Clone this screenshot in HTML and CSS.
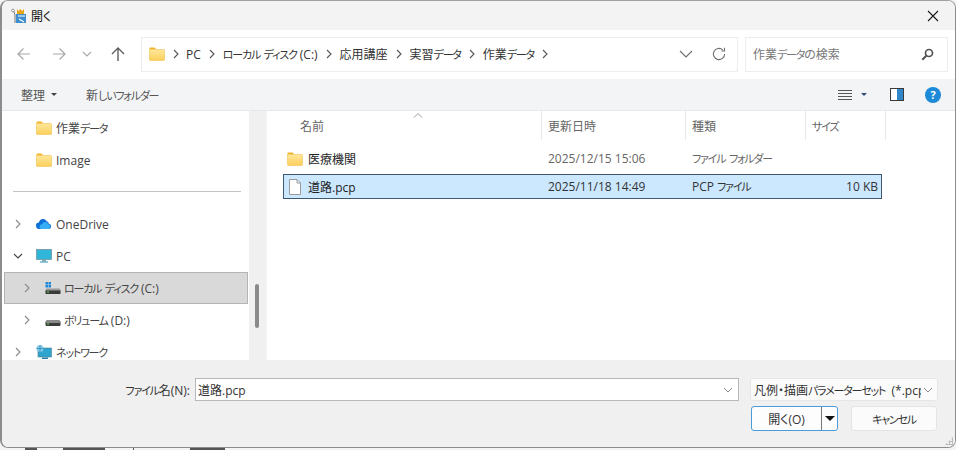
FILE: index.html
```html
<!DOCTYPE html>
<html lang="ja">
<head>
<meta charset="utf-8">
<title>開く</title>
<link rel="stylesheet" href="styles.css">
</head>
<body>
<svg class="defs" width="0" height="0" aria-hidden="true">
  <defs>
    <linearGradient id="fg" x1="0" y1="0" x2="0" y2="1"><stop offset="0" stop-color="#ffe79a"/><stop offset="1" stop-color="#fbcf5c"/></linearGradient>
    <symbol id="folder" viewBox="0 0 16 14">
      <path d="M0.5 1.5a1 1 0 0 1 1-1h4l2 2h-7z" fill="#f0b429"/>
      <path d="M0.5 2.5h14a1 1 0 0 1 1 1v9a1 1 0 0 1-1 1h-13a1 1 0 0 1-1-1z" fill="url(#fg)" stroke="#f2c14e" stroke-width=".6"/>
    </symbol>
    <symbol id="chev" viewBox="0 0 10 10"><path d="M3 1l4 4-4 4" fill="none" stroke="currentColor" stroke-width="1.1"/></symbol>
    <symbol id="drive" viewBox="0 0 16 14">
      <rect x="0.5" y="8" width="15" height="5" rx="1" fill="#3c3c3c"/>
      <rect x="1" y="7" width="14" height="3" rx="1" fill="#8a8a8a"/>
      <rect x="2" y="10.5" width="2" height="1" fill="#5fd35f"/>
    </symbol>
  </defs>
</svg>
<div class="dialog">
  <header class="titlebar">
    <svg class="app-icon" width="16" height="16" viewBox="0 0 16 16" aria-hidden="true">
      <rect x="5" y="6" width="10" height="9" fill="#3f8fd0"/>
      <path d="M6 1l1.5 2L9.5 1l1.5 2L13 1v5H6z" fill="#e8a712"/>
      <path d="M7 8h7M8 11l5 3" stroke="#fff" stroke-width="1.2"/>
      <path d="M2 1l2 6v8" fill="none" stroke="#777" stroke-width="1"/>
      <circle cx="2" cy="2.5" r="1.4" fill="#fff" stroke="#777" stroke-width=".7"/>
    </svg>
    <span class="title-text">開く</span>
    <svg class="close" width="12" height="12" viewBox="0 0 12 12" aria-hidden="true"><path d="M1 1l10 10M11 1L1 11" stroke="#1a1a1a" stroke-width="1.1"/></svg>
  </header>

  <nav class="navbar">
    <div class="nav-buttons">
      <svg class="nav-btn" width="16" height="16" viewBox="0 0 16 16" aria-hidden="true"><path d="M14 8H2M7.5 2.5L2 8l5.5 5.5" fill="none" stroke="#a8a8a8" stroke-width="1.2"/></svg>
      <svg class="nav-btn" width="16" height="16" viewBox="0 0 16 16" aria-hidden="true"><path d="M2 8h12M8.500 2.500L14 8l-5.500 5.500" fill="none" stroke="#a8a8a8" stroke-width="1.2"/></svg>
      <svg class="nav-small" width="10" height="10" viewBox="0 0 10 10" aria-hidden="true"><path d="M1 3l4 4 4-4" fill="none" stroke="#a8a8a8" stroke-width="1.1"/></svg>
      <svg class="nav-up" width="16" height="16" viewBox="0 0 16 16" aria-hidden="true"><path d="M8 15V2M2 8l6-6 6 6" fill="none" stroke="#5f5f5f" stroke-width="1.4"/></svg>
    </div>
    <div class="address">
      <svg class="addr-folder" width="16" height="14" aria-hidden="true"><use href="#folder"/></svg>
      <svg class="crumb-sep first" width="10" height="10" aria-hidden="true"><use href="#chev"/></svg>
      <span>PC</span>
      <svg class="crumb-sep" width="10" height="10" aria-hidden="true"><use href="#chev"/></svg>
      <span><span class="k">ローカル ディスク</span> (C:)</span>
      <svg class="crumb-sep" width="10" height="10" aria-hidden="true"><use href="#chev"/></svg>
      <span>応用講座</span>
      <svg class="crumb-sep" width="10" height="10" aria-hidden="true"><use href="#chev"/></svg>
      <span>実習<span class="k">データ</span></span>
      <svg class="crumb-sep" width="10" height="10" aria-hidden="true"><use href="#chev"/></svg>
      <span>作業<span class="k">データ</span></span>
      <svg class="crumb-sep" width="10" height="10" aria-hidden="true"><use href="#chev"/></svg>
      <span class="spacer"></span>
      <svg class="addr-down" width="14" height="8" viewBox="0 0 14 8" aria-hidden="true"><path d="M1 1l6 6 6-6" fill="none" stroke="#6e6e6e" stroke-width="1.1"/></svg>
      <svg class="addr-refresh" width="14" height="14" viewBox="0 0 14 14" aria-hidden="true"><path d="M12.600 7A5.600 5.600 0 1 1 10.800 2.900" fill="none" stroke="#6e6e6e" stroke-width="1.1"/><path d="M12.500 .8v3.200H9.300" fill="none" stroke="#6e6e6e" stroke-width="1.1"/></svg>
    </div>
    <div class="search">
      <span>作業<span class="k">データ</span>の検索</span>
      <svg width="13" height="13" viewBox="0 0 13 13" aria-hidden="true"><circle cx="8" cy="5" r="3.500" fill="none" stroke="#555" stroke-width="1.700"/><path d="M5.500 7.500L1.300 11.700" stroke="#555" stroke-width="2"/></svg>
    </div>
  </nav>

  <div class="toolbar">
    <span class="tool">整理<i class="caret"></i></span>
    <span class="tool new-folder"><span>新<span class="k">しいフォルダー</span></span></span>
    <span class="spacer"></span>
    <svg class="tb-list" width="14" height="12" viewBox="0 0 14 12" aria-hidden="true"><path d="M0 1.500h14M0 4.500h14M0 7.500h14M0 10.500h14" stroke="#555" stroke-width="1"/></svg>
    <i class="caret dark"></i>
    <span class="pane-icon"></span>
    <span class="help">?</span>
  </div>

  <main class="main">
    <aside class="tree">
      <div class="row lvl1"><span class="chev-slot"></span><svg class="ico" width="16" height="14" aria-hidden="true"><use href="#folder"/></svg><span>作業<span class="k">データ</span></span></div>
      <div class="row lvl1"><span class="chev-slot"></span><svg class="ico" width="16" height="14" aria-hidden="true"><use href="#folder"/></svg><span>Image</span></div>
      <div class="tree-sep"></div>
      <div class="row lvl1"><span class="chev-slot"><svg width="10" height="10" aria-hidden="true"><use href="#chev"/></svg></span>
        <svg class="ico" width="16" height="12" viewBox="0 0 16 11" aria-hidden="true"><path d="M3.500 10.500a3.200 3.200 0 0 1-.5-6.400A4 4 0 0 1 10.600 2.800a3.300 3.300 0 0 1 2.300 2.400A2.700 2.700 0 0 1 13 10.500z" fill="#0f6fd8"/><path d="M5 10.500a2.500 2.500 0 0 1 1-4.800 3.500 3.500 0 0 1 6.500 0A2.600 2.600 0 0 1 13 10.500z" fill="#35aef5"/></svg>
        <span>OneDrive</span></div>
      <div class="row lvl1"><span class="chev-slot down"><svg width="10" height="10" viewBox="0 0 10 10" aria-hidden="true"><path d="M1 3l4 4 4-4" fill="none" stroke="#444" stroke-width="1.200"/></svg></span>
        <svg class="ico" width="16" height="14" viewBox="0 0 16 14" aria-hidden="true"><rect x="0.500" y="0.500" width="15" height="10" fill="#2fb6d8" stroke="#6d8a96" stroke-width=".7"/><rect x="6" y="11" width="4" height="1.500" fill="#8aa"/><rect x="4" y="12.500" width="8" height="1" fill="#2a93b8"/></svg>
        <span>PC</span></div>
      <div class="row lvl2 selected"><span class="chev-slot"><svg width="10" height="10" aria-hidden="true"><use href="#chev"/></svg></span>
        <svg class="ico" width="16" height="14" viewBox="0 0 16 14" aria-hidden="true"><rect x="0.500" y="1" width="2.500" height="2.500" fill="#1e88d8"/><rect x="3.500" y="1" width="2.500" height="2.500" fill="#1e88d8"/><rect x="0.500" y="4" width="2.500" height="2.500" fill="#1e88d8"/><rect x="3.500" y="4" width="2.500" height="2.500" fill="#1e88d8"/><rect x="0.500" y="9" width="15" height="4" rx=".5" fill="#3a3a3a"/><rect x="1" y="7.500" width="14" height="2" fill="#999"/><rect x="2" y="10.500" width="2" height="1" fill="#5fd35f"/></svg>
        <span><span class="k">ローカル ディスク</span> (C:)</span></div>
      <div class="row lvl2"><span class="chev-slot"><svg width="10" height="10" aria-hidden="true"><use href="#chev"/></svg></span>
        <svg class="ico" width="16" height="14" aria-hidden="true"><use href="#drive"/></svg>
        <span><span class="k">ボリューム</span> (D:)</span></div>
      <div class="row lvl1"><span class="chev-slot"><svg width="10" height="10" aria-hidden="true"><use href="#chev"/></svg></span>
        <svg class="ico" width="16" height="15" viewBox="0 0 16 15" aria-hidden="true"><rect x="2" y="3" width="13.500" height="9" fill="#2fa4cf" stroke="#4c7d90" stroke-width=".6"/><circle cx="4" cy="3.500" r="3.500" fill="#7fc8e8"/><path d="M.5 3.500h7M4 0v7" stroke="#2a7ca8" stroke-width=".6"/><rect x="6" y="12.500" width="6" height="1.500" fill="#2a7ca8"/></svg>
        <span class="k">ネットワーク</span></div>
    </aside>
    <div class="scrollbar"><div class="thumb"></div></div>
    <section class="files">
      <div class="col-head">
        <svg class="sort" width="10" height="5" viewBox="0 0 10 5" aria-hidden="true"><path d="M1 4.500l4-4 4 4" fill="none" stroke="#999" stroke-width="1"/></svg>
        <span class="hc name">名前</span>
        <span class="hc date">更新日時</span>
        <span class="hc type">種類</span>
        <span class="hc size"><span class="k">サイズ</span></span>
      </div>
      <div class="file">
        <span class="f-name"><svg width="16" height="14" aria-hidden="true"><use href="#folder"/></svg><b>医療機関</b></span>
        <span class="f-date">2025/12/15 15:06</span>
        <span class="f-type"><span class="k">ファイル フォルダー</span></span>
        <span class="f-size"></span>
      </div>
      <div class="file current">
        <span class="f-name"><svg width="16" height="16" viewBox="0 0 16 16" aria-hidden="true"><path d="M2.500 .5h7.500l3.500 3.500v11.500H2.500z" fill="#fff" stroke="#9a9a9a"/><path d="M10 .5v3.500h3.500" fill="none" stroke="#9a9a9a"/></svg><b>道路.pcp</b></span>
        <span class="f-date">2025/11/18 14:49</span>
        <span class="f-type">PCP <span class="k">ファイル</span></span>
        <span class="f-size">10 KB</span>
      </div>
    </section>
  </main>

  <footer class="bottom">
    <div class="form-row">
      <label class="fn-label" for="fn"><span class="k">ファイル</span>名(N):</label>
      <div class="fn-box"><input id="fn" class="fn-input" value="道路.pcp"><svg width="10" height="10" viewBox="0 0 10 10" aria-hidden="true"><path d="M1 3l4 4 4-4" fill="none" stroke="#888" stroke-width="1"/></svg></div>
      <div class="filter"><span class="filter-text">凡例・描画<span class="k">パラメーターセット</span>&nbsp;&nbsp;(*.pcp)</span><svg width="10" height="10" viewBox="0 0 10 10" aria-hidden="true"><path d="M1 3l4 4 4-4" fill="none" stroke="#888" stroke-width="1"/></svg></div>
    </div>
    <div class="btn-row">
      <div class="btn primary"><span class="btn-main">開く(O)</span><span class="btn-split"><i></i></span></div>
      <div class="btn cancel"><span class="k">キャンセル</span></div>
    </div>
    <div class="grip"></div>
  </footer>
</div>
<div class="behind"><i class="m1"></i><i class="m2"></i><i class="m3"></i><i class="m4"></i></div>
</body>
</html>
```
FILE: styles.css
```css
* { box-sizing: border-box; }
html, body { margin: 0; padding: 0; }
body {
  width: 956px; height: 450px; overflow: hidden; background: #f4f4f4;
  font-family: "Open Sans", "Noto Sans CJK JP", sans-serif;
  font-size: 12px; color: #333;
  font-feature-settings: "palt" 1;
}
.defs { position: absolute; }
.spacer { flex: 1; }
.k { font-size: 11px; letter-spacing: -1.2px; word-spacing: 2px; }

.dialog {
  width: 956px; height: 448px; display: flex; flex-direction: column;
  border: 1px solid #8c8c8c; border-top-color: #a0a0a0; border-left-width: 2px;
  border-radius: 8px; overflow: hidden; background: #fff;
}

.titlebar { height: 29px; flex: none; display: flex; align-items: center; background: #f3f3f3; padding: 0 16px 0 9px; }
.app-icon { margin-right: 4px; }
.title-text { flex: 1; color: #111; font-size: 12px; }

.navbar { height: 49px; flex: none; display: flex; align-items: center; background: #fff; padding-bottom: 1px; }
.nav-buttons { width: 139px; flex: none; display: flex; align-items: center; }
.nav-btn { margin-left: 14px; flex: none; }
.nav-btn:nth-child(2) { margin-left: 19px; }
.nav-small { margin-left: 15px; flex: none; }
.nav-up { margin-left: 18px; flex: none; }

.address {
  width: 597px; height: 35px; flex: none; display: flex; align-items: center;
  border: 1px solid #ededed; padding: 0 11px 0 7px; color: #333;
}
.addr-folder { margin-right: 6px; }
.crumb-sep { color: #555; margin: 0 6px; flex: none; }
.crumb-sep.first { margin: 0 5px 0 0; }
.addr-down { margin-right: 19px; }

.search {
  width: 203px; height: 35px; flex: none; margin-left: 7px; display: flex; align-items: center;
  justify-content: space-between; border: 1px solid #ededed; padding: 0 13px 0 7px; color: #777;
}

.toolbar { height: 32px; flex: none; display: flex; align-items: center; background: #f3f4f6; border-bottom: 1px solid #e8e8e8; padding: 0 14px 0 19px; color: #555; }
.tool { display: inline-flex; align-items: center; }
.new-folder { margin-left: 29px; }
.caret { display: inline-block; margin-left: 6px; border: 3px solid transparent; border-top: 3px solid #444; border-bottom: 0; }
.caret.dark { margin: 0 0 0 9px; border-top-color: #2a4a78; }
.tb-list { flex: none; }
.pane-icon {
  width: 14px; height: 13px; margin-left: 23px; border: 1px solid #3a3a3a;
  background: linear-gradient(90deg, #fff 50%, #2f86c8 50%);
}
.help {
  width: 16px; height: 16px; margin-left: 21px; border-radius: 50%; background: #1c8ad8; color: #fff;
  font-size: 11px; font-weight: 700; line-height: 16px; text-align: center;
}

.main { flex: 1; min-height: 0; display: flex; overflow: hidden; background: #fff; }
.tree { width: 247px; flex: none; overflow: hidden; padding-top: 1px; color: #444; }
.row { height: 32px; display: flex; align-items: center; margin-left: 2px; border: 1px solid transparent; }
.row.lvl1 { padding-left: 5px; }
.row.lvl2 { padding-left: 14px; }
.row.selected { background: #d9d9d9; border-color: #b4b4b4; margin-right: 1px; }
.chev-slot { width: 16px; flex: none; display: flex; justify-content: center; color: #8a8a8a; }
.ico { margin-left: 10px; margin-right: 4px; flex: none; }
.lvl2 .ico { margin-right: 3px; }
.tree-sep { height: 32px; margin: 0 8px 0 11px; display: flex; align-items: center; }
.tree-sep::before { content: ""; display: block; width: 100%; border-top: 1px solid #c4c4c4; margin-top: -2px; }

.scrollbar { width: 17px; flex: none; background: #f0f0f0; padding: 173px 0 0 6px; }
.thumb { width: 4px; height: 44px; border-radius: 2px; background: #8a8a8a; }

.files { flex: 1; border-left: 1px solid #f4f4f4; }
.col-head { height: 29px; position: relative; display: grid; grid-template-columns: 275px 144px 120px 80px; color: #666; }
.sort { position: absolute; left: 146px; top: 2px; }
.hc { display: flex; align-items: center; padding-left: 6px; border-right: 1px solid #e8e8e8; }
.hc.name { padding-left: 33px; }
.file {
  height: 25px; margin-left: 16px; width: 599px; display: grid;
  grid-template-columns: 257px 144px 120px 1fr; align-items: center; border: 1px solid transparent;
}
.col-head + .file { margin-top: 6px; }
.file + .file { margin-top: 3px; }
.file.current { background: #cce8ff; border-color: #3f5a70; }
.f-name { display: flex; align-items: center; padding-left: 3px; }
.f-name b { font-weight: 400; margin-left: 5px; color: #222; }
.f-date { padding-left: 7px; color: #666; }
.current .f-date, .current .f-type, .current .f-size { color: #333; }
.f-type { padding-left: 7px; color: #666; }
.f-size { text-align: right; padding-right: 3px; }

.bottom { height: 87px; flex: none; position: relative; background: #f0f0f0; padding: 18px 17px 0 0; }
.form-row { display: flex; align-items: center; justify-content: flex-end; }
.fn-label { margin-right: 5px; color: #333; }
.fn-box {
  width: 544px; height: 23px; display: flex; align-items: center; background: #fff;
  border: 1px solid #b8b8b8; padding: 0 5px 0 2px; margin-right: 11px;
}
.fn-input { flex: 1; min-width: 0; border: 0; outline: 0; padding: 0; background: transparent; font: inherit; font-feature-settings: "palt" 1; color: #333; }
.filter {
  width: 188px; height: 23px; display: flex; align-items: center; background: #fbfbfb;
  border: 1px solid #e6e6e6; border-radius: 3px; padding: 0 4px 0 3px;
}
.filter-text { flex: 1; min-width: 0; margin-right: 2px; white-space: nowrap; overflow: hidden; color: #333; }
.filter svg { flex: none; }
.btn-row { display: flex; justify-content: flex-end; gap: 13px; margin-top: 5px; }
.btn {
  height: 25px; display: flex; align-items: center; justify-content: center;
  background: #fbfbfb; border: 1px solid #e4e4e4; border-radius: 3px; color: #333;
}
.btn.primary { width: 87px; border-color: #4b9bd8; background: #fdfdfd; }
.btn.cancel { width: 86px; margin-right: 1px; }
.btn-main { flex: 1; text-align: center; }
.btn-split { width: 16px; height: 100%; flex: none; display: flex; align-items: center; justify-content: center; border-left: 1px solid #777; }
.btn-split i { border: 5px solid transparent; border-top: 5px solid #111; border-bottom: 0; }
.grip { position: absolute; right: 2px; bottom: 2px; width: 8px; height: 8px; background: radial-gradient(circle, #bbb 1px, transparent 1.2px) 0 0 / 3px 3px; clip-path: polygon(100% 0, 100% 100%, 0 100%); }

.behind { height: 2px; position: relative; background: #f4f4f4; }
.behind i { position: absolute; top: 0; height: 2px; background: #555; }
.m1 { left: 25px; width: 12px; }
.m2 { left: 63px; width: 42px; }
.m3 { left: 133px; width: 1px; }
.m4 { left: 190px; width: 35px; }
```
